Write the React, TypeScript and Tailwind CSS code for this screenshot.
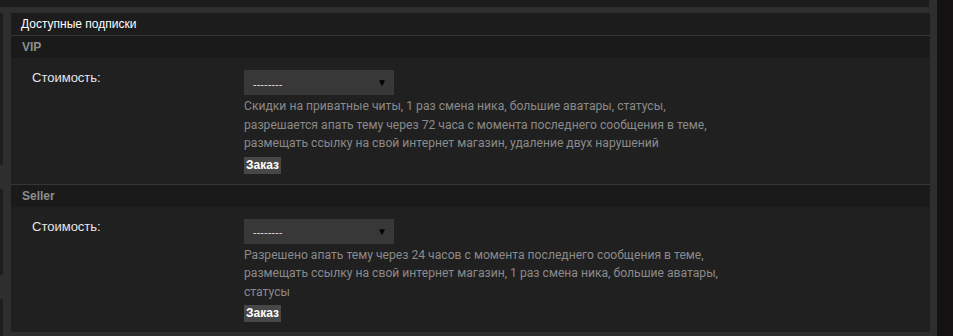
const plans = [
  {
    title: "VIP",
    text: "Скидки на приватные читы, 1 раз смена ника, большие аватары, статусы, разрешается апать тему через 72 часа с момента последнего сообщения в теме, размещать ссылку на свой интернет магазин, удаление двух нарушений",
  },
  {
    title: "Seller",
    text: "Разрешено апать тему через 24 часов с момента последнего сообщения в теме, размещать ссылку на свой интернет магазин, 1 раз смена ника, большие аватары, статусы",
  },
];

const Plan = ({ title, text, first }: { title: string; text: string; first: boolean }) => (
  <div className={first ? "shrink-0" : "shrink-0 border-t border-[#363636]"}>
    <div className="h-[22px] bg-[#1a1a1a] pl-[11px] flex items-center text-[12px] font-bold text-[#8e8e8e]">
      {title}
    </div>
    <div className="flex pt-[12px] pb-[10px]">
      <div className="w-[233px] shrink-0 pl-[21px] pt-[1px] text-[13px] leading-[13px] text-[#e6e6e6]">
        Стоимость:
      </div>
      <div className="flex flex-col items-start">
        <div className="w-[150px] h-[25px] bg-[#383838] flex items-center justify-between pl-[9px] pr-[7px]">
          <span className="text-[11px] text-[#e0e0e0] mt-[3px]">--------</span>
          <span className="text-[10px] text-black">▼</span>
        </div>
        <p className="w-[480px] mt-[2px] text-[12.15px] leading-[18.5px] text-[#8a8a8a] font-['Roboto',sans-serif]">
          {text}
        </p>
        <button className="mt-[4px] h-[17px] px-[2px] bg-[#474747] text-white text-[12px] font-bold leading-[17px]">
          Заказ
        </button>
      </div>
    </div>
  </div>
);

export default function App() {
  return (
    <div className="w-[953px] h-[336px] bg-[#141213] flex overflow-hidden font-['Liberation_Sans',Arial,sans-serif]">
      <div className="w-[937px] shrink-0 bg-[#2e2e2e] flex flex-col">
        <div className="h-[7px] w-[929px] shrink-0 bg-[#1c1c1c]" />
        <div className="flex mt-[6px] shrink-0">
          <div className="w-[11px] shrink-0 flex flex-col gap-[24px]">
            <div className="w-[3px] h-[152px] bg-[#1e1e1e]" />
            <div className="w-[3px] h-[86px] bg-[#1e1e1e]" />
            <div className="w-[3px] h-[60px] bg-[#1e1e1e]" />
          </div>
          <div className="w-[919px] self-start bg-[#202020] flex flex-col">
            <div className="h-[23px] shrink-0 bg-[#1c1c1c] pl-[10px] flex items-center text-[12px] text-white border-b border-[#363636]">
              Доступные подписки
            </div>
            {plans.map((p, i) => (
              <Plan key={p.title} title={p.title} text={p.text} first={i === 0} />
            ))}
          </div>
        </div>
      </div>
    </div>
  );
}
